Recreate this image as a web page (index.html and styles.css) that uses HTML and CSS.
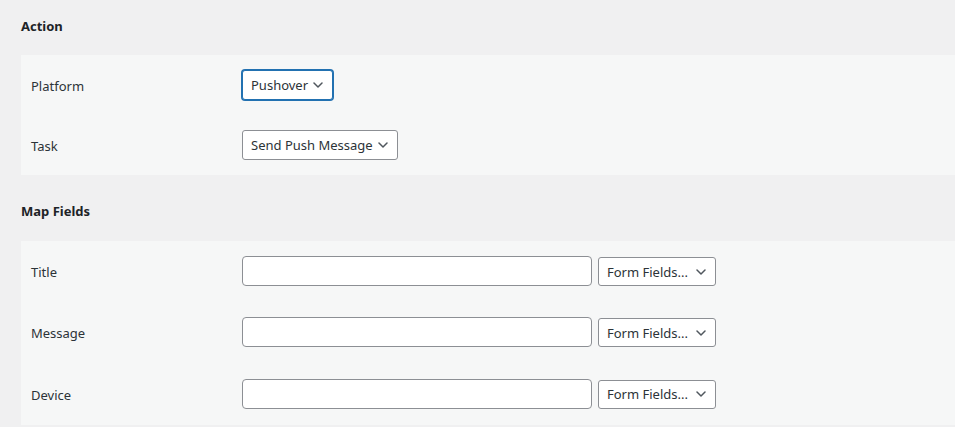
FILE: index.html
```html
<!DOCTYPE html>
<html lang="en">
<head>
<meta charset="utf-8">
<title>Action settings</title>
<link rel="stylesheet" href="styles.css">
</head>
<body>
<div class="page">
  <section class="group">
    <h2 class="group-title">Action</h2>
    <div class="panel">
      <div class="row">
        <div class="label">Platform</div>
        <div class="field">
          <div class="select is-focused"><span class="select-text">Pushover</span><svg class="chev" viewBox="0 0 10 6" width="10" height="6"><path d="M1 1 L5 5 L9 1"/></svg></div>
        </div>
      </div>
      <div class="row">
        <div class="label">Task</div>
        <div class="field">
          <div class="select"><span class="select-text">Send Push Message</span><svg class="chev" viewBox="0 0 10 6" width="10" height="6"><path d="M1 1 L5 5 L9 1"/></svg></div>
        </div>
      </div>
    </div>
  </section>
  <section class="group group-map">
    <h2 class="group-title">Map Fields</h2>
    <div class="panel panel-map">
      <div class="row row-map">
        <div class="label">Title</div>
        <div class="field">
          <div class="input"></div>
          <div class="select select-fixed"><span class="select-text">Form Fields...</span><svg class="chev" viewBox="0 0 10 6" width="10" height="6"><path d="M1 1 L5 5 L9 1"/></svg></div>
        </div>
      </div>
      <div class="row row-map">
        <div class="label">Message</div>
        <div class="field">
          <div class="input"></div>
          <div class="select select-fixed"><span class="select-text">Form Fields...</span><svg class="chev" viewBox="0 0 10 6" width="10" height="6"><path d="M1 1 L5 5 L9 1"/></svg></div>
        </div>
      </div>
      <div class="row row-map">
        <div class="label">Device</div>
        <div class="field">
          <div class="input"></div>
          <div class="select select-fixed"><span class="select-text">Form Fields...</span><svg class="chev" viewBox="0 0 10 6" width="10" height="6"><path d="M1 1 L5 5 L9 1"/></svg></div>
        </div>
      </div>
    </div>
  </section>
</div>
</body>
</html>
```
FILE: styles.css
```css
html, body {
  margin: 0;
  padding: 0;
  background: #f0f0f1;
  overflow: hidden;
}

body {
  font-family: "Noto Sans", "Open Sans", "Liberation Sans", sans-serif;
  font-size: 13px;
  color: #1d2327;
}

.page {
  display: flex;
  flex-direction: column;
  gap: 10px;
  padding-left: 21px;
}

.group {
  display: flow-root;
}

.group-title {
  margin: 16px 0 19px;
  font-size: 13px;
  line-height: 20px;
  font-weight: 700;
  color: #1d2327;
}

.group-map .group-title {
  margin-bottom: 20px;
}

.panel {
  background: #f6f7f7;
  padding-left: 10px;
}

.row {
  display: grid;
  grid-template-columns: 211px 1fr;
  align-items: center;
  height: 60px;
}

.row-map {
  height: 61.333px;
  align-items: start;
  padding-top: 15px;
  box-sizing: border-box;
}

.row-map .label {
  line-height: 30px;
}

.label {
  color: #2c3338;
  padding-top: 1px;
}

.field {
  display: flex;
  align-items: center;
  gap: 6px;
}

.select {
  display: inline-flex;
  align-items: center;
  gap: 5px;
  height: 30px;
  box-sizing: border-box;
  padding: 0 9px 0 8px;
  border: 1px solid #8c8f94;
  border-radius: 3px;
  background: #fff;
  color: #2c3338;
  white-space: nowrap;
}

.select.is-focused {
  border-color: #2271b1;
  box-shadow: 0 0 0 1px #2271b1;
}

.select-fixed {
  width: 118px;
  height: 29px;
  margin-top: 1px;
}

.select-fixed .chev {
  margin-left: auto;
}

.chev {
  flex: none;
  fill: none;
  stroke: #50575e;
  stroke-width: 1.5;
  stroke-linecap: round;
  stroke-linejoin: round;
}

.input {
  width: 350px;
  height: 30px;
  box-sizing: border-box;
  border: 1px solid #8c8f94;
  border-radius: 4px;
  background: #fff;
}
```
